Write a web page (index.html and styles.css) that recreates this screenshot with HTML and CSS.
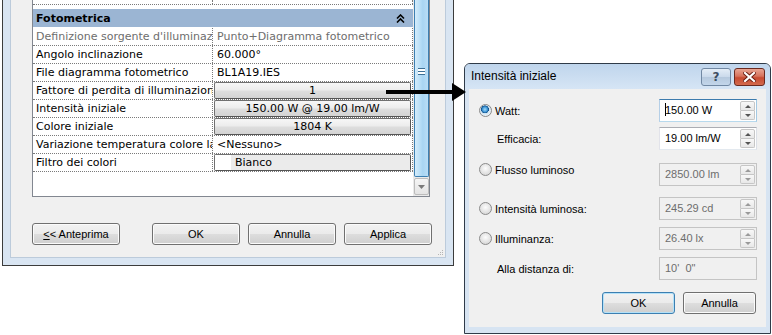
FILE: index.html
```html
<!DOCTYPE html>
<html>
<head>
    <title>Intensità iniziale</title>
    <link rel="stylesheet" href="styles.css">
</head>
<body>
<div class="stage">

    <div class="props-win">
        <div class="props-body">
            <div class="grid">
                <div class="rows">
                    <div class="row row-cut"><div class="key"></div><div class="val"></div></div>

                    <div class="cat">
                        <span>Fotometrica</span>
                        <svg class="chev" width="9" height="9" viewBox="0 0 9 9">
                            <polyline points="1,4.5 4.5,1 8,4.5" fill="none" stroke="#000" stroke-width="1.6"/>
                            <polyline points="1,8.5 4.5,5 8,8.5" fill="none" stroke="#000" stroke-width="1.6"/>
                        </svg>
                    </div>

                    <div class="row"><div class="key dim">Definizione sorgente d'illuminazi</div><div class="val dim">Punto+Diagramma fotometrico</div></div>
                    <div class="row"><div class="key">Angolo inclinazione</div><div class="val">60.000°</div></div>
                    <div class="row"><div class="key">File diagramma fotometrico</div><div class="val">BL1A19.IES</div></div>
                    <div class="row"><div class="key">Fattore di perdita di illuminazion</div><div class="val btn-cell"><span class="cell-btn">1</span></div></div>
                    <div class="row"><div class="key">Intensità iniziale</div><div class="val btn-cell"><span class="cell-btn">150.00 W @ 19.00 lm/W</span></div></div>
                    <div class="row"><div class="key">Colore iniziale</div><div class="val btn-cell"><span class="cell-btn">1804 K</span></div></div>
                    <div class="row"><div class="key">Variazione temperatura colore la</div><div class="val">&lt;Nessuno&gt;</div></div>
                    <div class="row"><div class="key">Filtro dei colori</div><div class="val btn-cell"><span class="cell-btn swatch-btn"><i class="swatch"></i>Bianco</span></div></div>
                </div>

                <div class="vscroll">
                    <div class="thumb">
                        <span class="grip"></span>
                    </div>
                    <div class="sb-down">
                        <svg width="7" height="4" viewBox="0 0 7 4"><polygon points="0,0 7,0 3.5,4" fill="#7a7a7a"/></svg>
                    </div>
                </div>
            </div>

            <div class="btn-row">
                <button class="btn"><u>&lt;</u>&lt; Anteprima</button>
                <button class="btn btn-ok">OK</button>
                <button class="btn">Annulla</button>
                <button class="btn">Applica</button>
            </div>

            <svg class="size-grip" width="8" height="8" viewBox="0 0 8 8">
                <rect x="6" y="2" width="1" height="1" fill="#b5b5b5"/>
                <rect x="4" y="4" width="1" height="1" fill="#b5b5b5"/>
                <rect x="6" y="4" width="1" height="1" fill="#b5b5b5"/>
                <rect x="2" y="6" width="1" height="1" fill="#b5b5b5"/>
                <rect x="4" y="6" width="1" height="1" fill="#b5b5b5"/>
                <rect x="6" y="6" width="1" height="1" fill="#b5b5b5"/>
            </svg>
        </div>
    </div>

    <div class="dlg">
        <div class="dlg-title">
            <span class="dlg-caption">Intensità iniziale</span>
            <span class="tb-btn tb-help">?</span>
            <span class="tb-btn tb-close">
                <svg width="13" height="10" viewBox="0 0 13 10">
                    <path d="M2 1 L11 9 M11 1 L2 9" stroke="#6b1f14" stroke-width="4" stroke-linecap="square"/>
                    <path d="M2 1 L11 9 M11 1 L2 9" stroke="#fff" stroke-width="2.2" stroke-linecap="square"/>
                </svg>
            </span>
        </div>

        <div class="dlg-body">
            <div class="f-row r-watt">
                <label class="opt"><i class="radio on"></i>Watt:</label>
                <div class="field focus"><span class="f-text"><i class="caret"></i>150.00 W</span><span class="spin"><b class="up"></b><b class="dn"></b></span></div>
            </div>
            <div class="f-row r-eff">
                <label class="sub">Efficacia:</label>
                <div class="field"><span class="f-text">19.00 lm/W</span><span class="spin"><b class="up"></b><b class="dn"></b></span></div>
            </div>
            <div class="f-row r-flux">
                <label class="opt"><i class="radio"></i>Flusso luminoso</label>
                <div class="field off"><span class="f-text">2850.00 lm</span><span class="spin"><b class="up"></b><b class="dn"></b></span></div>
            </div>
            <div class="f-row r-int">
                <label class="opt"><i class="radio"></i>Intensità luminosa:</label>
                <div class="field off"><span class="f-text">245.29 cd</span><span class="spin"><b class="up"></b><b class="dn"></b></span></div>
            </div>
            <div class="f-row r-lux">
                <label class="opt"><i class="radio"></i>Illuminanza:</label>
                <div class="field off"><span class="f-text">26.40 lx</span><span class="spin"><b class="up"></b><b class="dn"></b></span></div>
            </div>
            <div class="f-row r-dist">
                <label class="sub">Alla distanza di:</label>
                <div class="field off"><span class="f-text">10'&nbsp; 0"</span></div>
            </div>

            <div class="dlg-btns">
                <button class="btn btn-default">OK</button>
                <button class="btn">Annulla</button>
            </div>
        </div>
    </div>

    <svg class="arrow" width="86" height="24" viewBox="0 0 86 24">
        <rect x="2" y="8" width="69" height="4" fill="#000"/>
        <polygon points="68,1 82,10 68,19" fill="#000"/>
    </svg>
</div>
</body>
</html>
```

FILE: styles.css
```css
* {
    box-sizing: border-box;
}

body {
    margin: 0;
    background: #fff;
    font-family: "Liberation Sans", Arial, sans-serif;
    font-size: 11px;
    color: #000;
}

.stage {
    position: relative;
    display: flex;
    align-items: flex-start;
    width: 772px;
    height: 335px;
    overflow: hidden;
}

/* left window: property palette */
.props-win {
    margin-left: 2px;
    width: 452px;
    height: 266px;
    border: 1px solid #3c3c3c;
    border-top: 0;
    background: #d9e5f2;
    padding: 0 7px 7px 7px;
}

.props-body {
    position: relative;
    height: 100%;
    background: #f0f0f0;
    border: 1px solid #bccbdb;
    border-top: 0;
    padding-left: 21px;
}

.grid {
    display: flex;
    width: 398px;
    height: 197px;
    background: #fff;
    border: 1px solid #828790;
    border-top: 0;
    font-family: "DejaVu Sans", Verdana, sans-serif;
    font-size: 11px;
}

.rows {
    width: 380px;
}

.row {
    display: flex;
    height: 18px;
    border-bottom: 1px dotted #7a7a7a;
}

.row-cut {
    height: 5px;
}

.key {
    width: 180px;
    padding-left: 3px;
    line-height: 17px;
    white-space: nowrap;
    overflow: hidden;
    border-right: 1px dotted #7a7a7a;
}

.val {
    width: 200px;
    padding-left: 4px;
    line-height: 17px;
    white-space: nowrap;
    overflow: hidden;
    border-right: 1px dotted #7a7a7a;
}

.dim {
    color: #6d6d6d;
}

.cat {
    display: flex;
    align-items: center;
    justify-content: space-between;
    height: 18px;
    margin: 4px 0 1px 0;
    padding: 0 8px 0 3px;
    background: #9bb5d3;
    font-weight: bold;
}

.btn-cell {
    padding: 0 1px;
}

.cell-btn {
    display: block;
    height: 17px;
    line-height: 15px;
    text-align: center;
    border: 1px solid #707070;
    border-right-color: #555;
    border-bottom-color: #555;
    border-radius: 2px;
    background: linear-gradient(#f7f7f7, #ececec 48%, #dedede 52%, #d3d3d3);
}

.swatch-btn {
    display: flex;
    text-align: left;
    background: #ebebeb;
}

.swatch {
    width: 16px;
    height: 15px;
    margin-right: 4px;
    background: #fff;
}

/* scrollbar */
.vscroll {
    width: 16px;
    height: 196px;
    background: #eaeaea;
    display: flex;
    flex-direction: column;
}

.thumb {
    display: flex;
    align-items: center;
    justify-content: center;
    height: 177px;
    margin-left: 1px;
    border: 1px solid #3c7fb1;
    border-top: 0;
    border-radius: 0 0 2px 2px;
    background: linear-gradient(90deg, #d4ecfb, #bfe2f8 30%, #a8d5f3 60%, #b9ddf6);
    padding-bottom: 34px;
}

.grip {
    width: 7px;
    height: 7px;
    border-top: 1px solid #3c6f95;
    border-bottom: 1px solid #3c6f95;
    background: linear-gradient(#fff 2px, #3c6f95 2px, #3c6f95 3px, #fff 3px);
}

.sb-down {
    display: flex;
    align-items: center;
    justify-content: center;
    height: 17px;
    margin: 1px 0 0 1px;
    border: 1px solid #bcbcbc;
    border-radius: 2px;
    background: linear-gradient(#f5f5f5, #e4e4e4);
}

/* buttons */
.btn {
    width: 88px;
    height: 22px;
    padding: 0;
    border: 1px solid #707070;
    border-radius: 3px;
    background: linear-gradient(#f2f2f2, #ebebeb 48%, #dddddd 52%, #cfcfcf);
    box-shadow: inset 0 0 0 1px #fbfbfb;
    font-family: "Liberation Sans", Arial, sans-serif;
    font-size: 11px;
    color: #000;
}

.btn-row {
    display: flex;
    gap: 8px;
    margin-top: 26px;
}

.btn-ok {
    margin-left: 24px;
}

.size-grip {
    position: absolute;
    right: 1px;
    bottom: 1px;
}

/* right dialog */
.dlg {
    margin: 63px 0 0 10px;
    width: 307px;
    height: 271px;
    border: 1px solid #2f3b49;
    border-radius: 6px 6px 0 0;
    background: #d7e4f2;
}

.dlg-title {
    display: flex;
    align-items: flex-start;
    height: 25px;
    padding: 0 5px 0 6px;
    border-radius: 5px 5px 0 0;
    background: linear-gradient(#bfd5ec, #d6e5f5);
}

.dlg-caption {
    flex: 1;
    line-height: 25px;
    font-size: 12px;
}

.tb-btn {
    display: flex;
    align-items: center;
    justify-content: center;
    height: 18px;
    margin-top: 4px;
    border-radius: 3px;
}

.tb-help {
    width: 30px;
    margin-right: 3px;
    border: 1px solid #7188a3;
    background: linear-gradient(#e4edf7, #cbdaeb 48%, #b6c9de 52%, #c3d6ea);
    font-family: "DejaVu Sans", sans-serif;
    font-size: 12px;
    font-weight: bold;
    color: #3d4d60;
}

.tb-close {
    width: 31px;
    border: 1px solid #6b2a20;
    background: linear-gradient(#e8a593, #d6725c 45%, #c74a31 55%, #d36b4e);
}

.dlg-body {
    display: flex;
    flex-direction: column;
    height: 238px;
    margin: 0 4px;
    padding: 10px 9px 0 10px;
    background: #f0f0f0;
}

.f-row {
    display: flex;
    align-items: center;
    height: 23px;
}

.r-eff { margin-top: 5px; }
.r-flux { margin-top: 13px; align-items: flex-start; }
.r-int { margin-top: 11px; }
.r-lux { margin-top: 7px; }
.r-dist { margin-top: 7px; }

.opt {
    display: flex;
    align-items: center;
    gap: 3px;
}

.sub {
    padding-left: 18px;
}

.radio {
    display: block;
    width: 13px;
    height: 13px;
    border: 1px solid #8a8a8a;
    border-radius: 50%;
    background: radial-gradient(circle at 50% 40%, #fdfdfd, #dcdcdc 70%, #c9c9c9);
}

.radio.on {
    background: radial-gradient(circle at 45% 40%, #a6dcfb 0, #3f97d6 28%, #0f4c86 42%, #cfe3f0 46%, #e9f1f7 70%, #c6ced6);
}

.field {
    display: flex;
    justify-content: space-between;
    width: 98px;
    height: 23px;
    margin-left: auto;
    border: 1px solid #abadb3;
    border-color: #abadb3 #dbdfe6 #e3e9ef #e2e3ea;
    background: #fff;
}

.field.focus {
    border-color: #3d7bad #a4c9e3 #b7d9ed #b5cfe7;
}

.field.off {
    border-color: #c4c4c4;
    background: #f0f0f0;
    color: #6d6d6d;
}

.f-text {
    display: flex;
    align-items: center;
    padding-left: 5px;
    height: 19px;
}

.caret {
    display: block;
    width: 1px;
    height: 13px;
    margin-right: -1px;
    background: #000;
}

.spin {
    display: flex;
    flex-direction: column;
    width: 15px;
    margin: 1px 1px 1px 0;
}

.spin b {
    flex: 1;
    display: flex;
    align-items: center;
    justify-content: center;
    border: 1px solid #c6c6c6;
    background: linear-gradient(#f8f8f8, #e8e8e8);
}

.spin .up {
    border-radius: 2px 2px 0 0;
}

.spin .dn {
    border-top: 0;
    border-radius: 0 0 2px 2px;
}

.spin b::after {
    content: "";
    border-left: 3px solid transparent;
    border-right: 3px solid transparent;
}

.spin .up::after {
    border-bottom: 3px solid #555;
}

.spin .dn::after {
    border-top: 3px solid #555;
}

.off .spin b::after {
    border-bottom-color: #9a9a9a;
    border-top-color: #9a9a9a;
}

.dlg-btns {
    display: flex;
    justify-content: flex-end;
    gap: 8px;
    margin-top: 12px;
    padding-right: 1px;
}

.dlg-btns .btn {
    width: 73px;
}

.btn-default {
    border-color: #3c7fb1;
    box-shadow: inset 0 0 0 1px #b4e1f8;
}

/* connector arrow between the two windows */
.arrow {
    position: absolute;
    left: 384px;
    top: 82px;
}
```
